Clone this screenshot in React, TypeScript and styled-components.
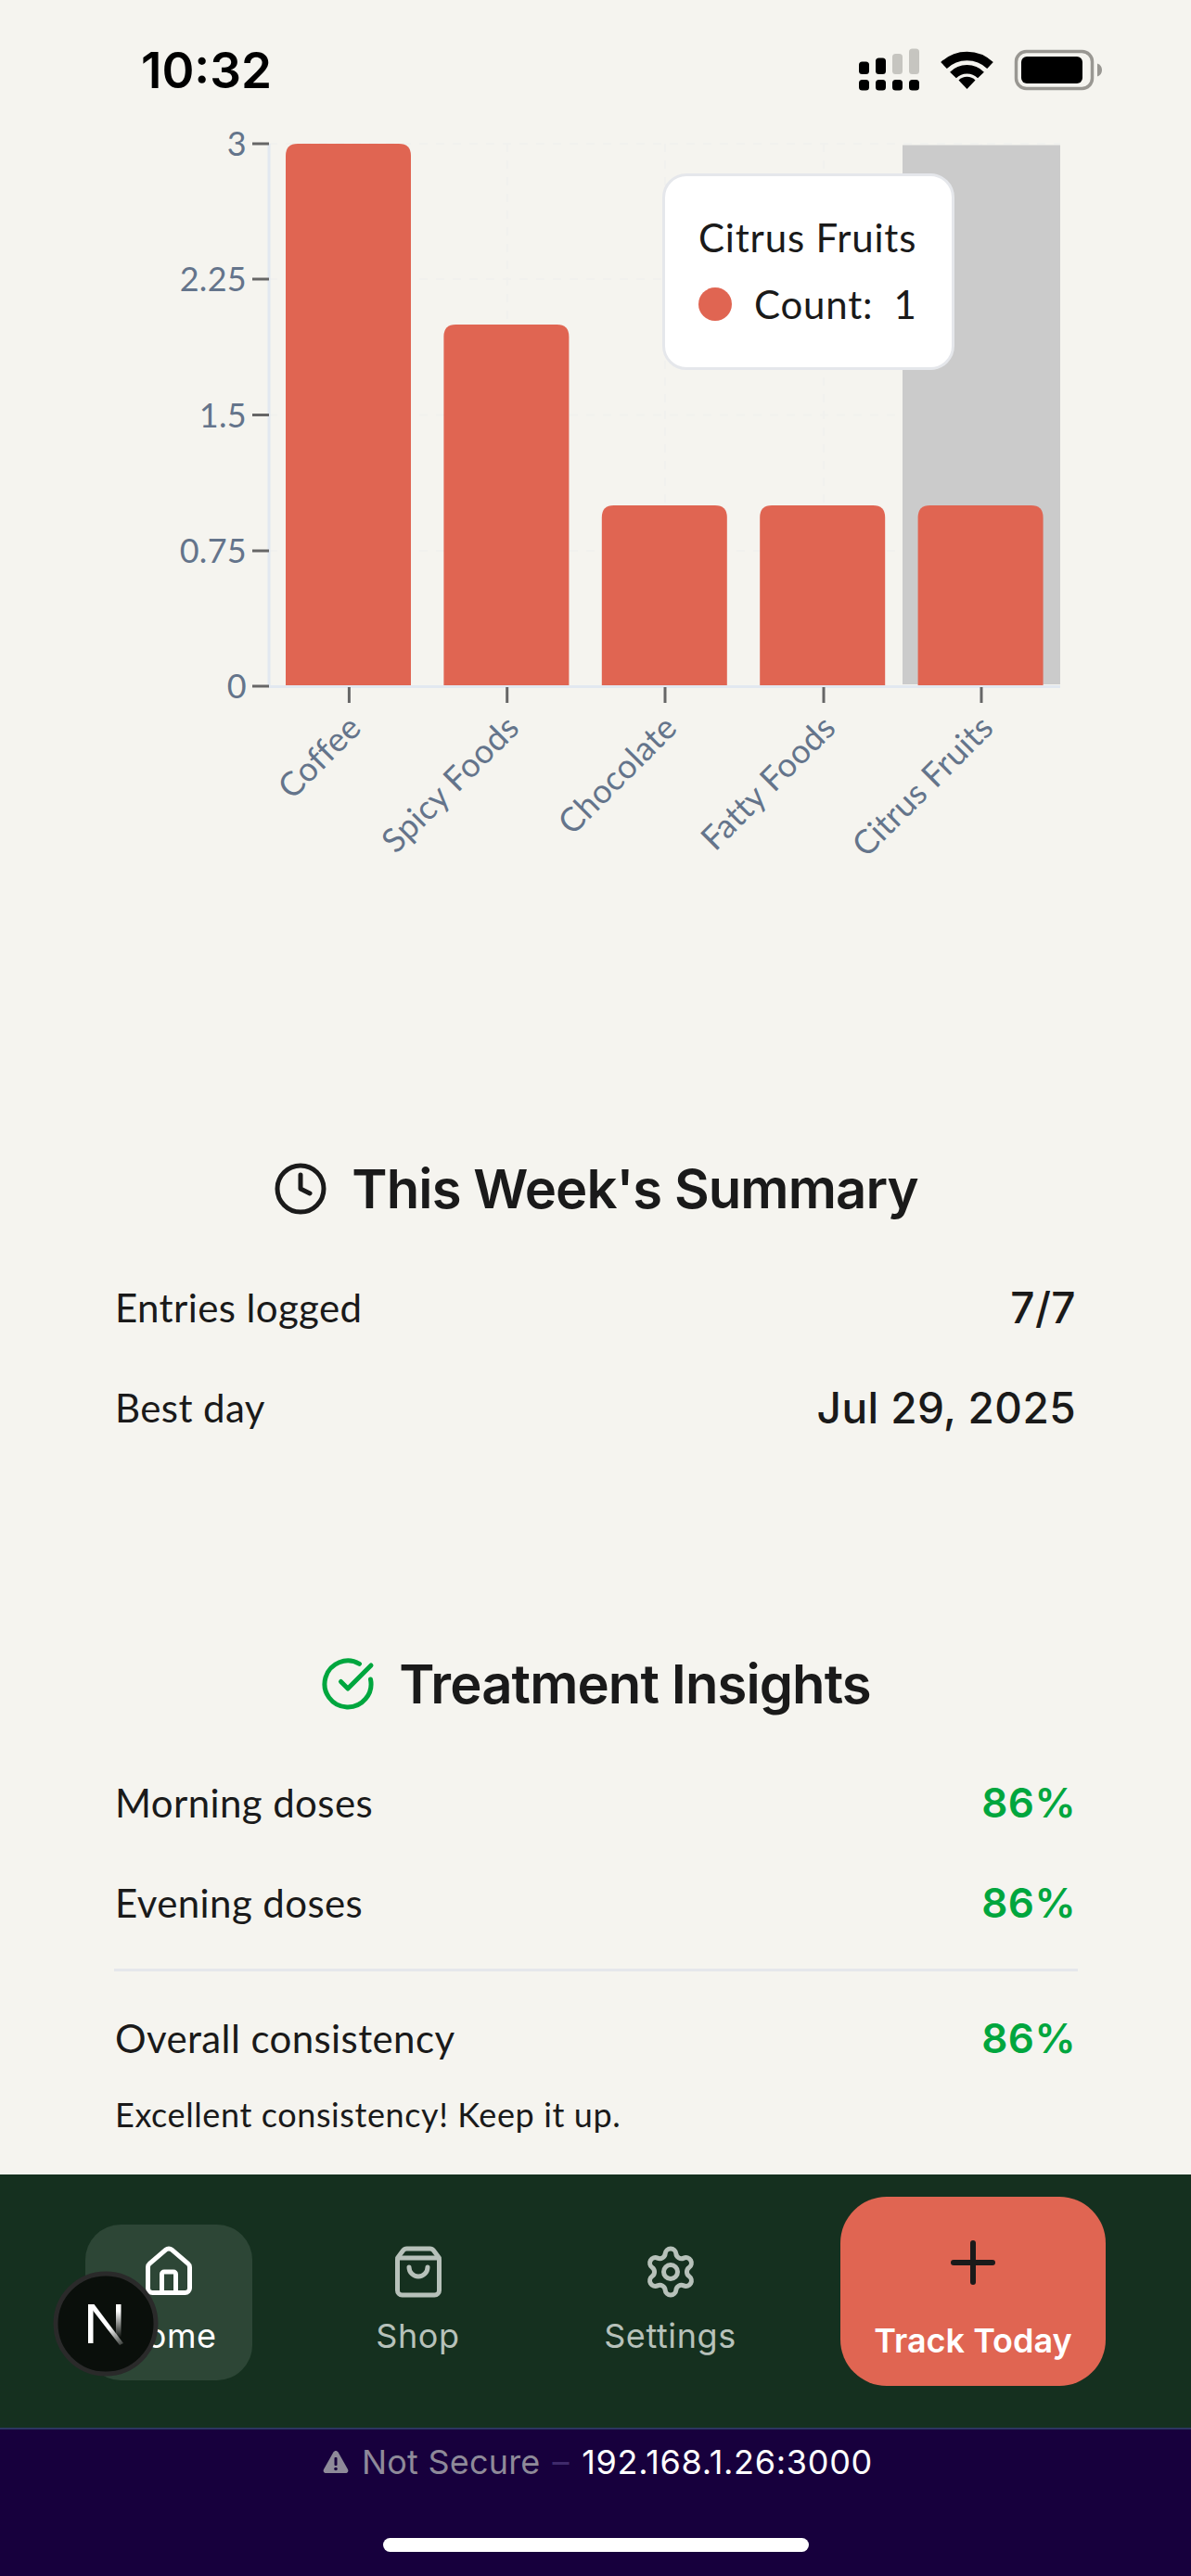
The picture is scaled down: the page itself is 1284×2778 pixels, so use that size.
import React from "react";
import styled, { createGlobalStyle } from "styled-components";
import { Clock, CircleCheckBig, House, ShoppingBag, Settings, Plus } from "lucide-react";

const Global = createGlobalStyle`
  html, body { margin: 0; padding: 0; background: #f5f4ef; }
  * { box-sizing: border-box; }
`;

const BODY = `"Lato", "Open Sans", sans-serif`;
const UI = `"Inter", "Liberation Sans", sans-serif`;
const CORAL = "#e06552";
const INK = "#1a1a1a";
const GREEN = "#00a63e";

const Page = styled.div`
  width: 1284px;
  height: 2778px;
  display: flex;
  flex-direction: column;
  overflow: hidden;
  position: relative;
  background: #f5f4ef;
  color: ${INK};
  font-family: ${BODY};
`;

const StatusBar = styled.header`
  height: 120px;
  flex: none;
  display: flex;
  justify-content: space-between;
  align-items: flex-start;
  padding: 44px 96px 0 152px;
`;
const Time = styled.div`
  font-family: ${UI};
  font-weight: 600;
  font-size: 53px;
  line-height: 64px;
  letter-spacing: 0;
  color: #000;
`;
const StatusIcons = styled.svg`
  display: block;
  margin-top: 8px;
`;

const ChartSection = styled.section`
  position: relative;
  height: 1126px;
  flex: none;
`;
const ChartSvg = styled.svg`
  display: block;
  width: 1284px;
  height: 1126px;
`;
const AxisText = styled.text`
  font-family: ${BODY};
  font-size: 36px;
  letter-spacing: 0.3px;
  fill: #64748b;
`;
const Tooltip = styled.div`
  position: absolute;
  left: 714px;
  top: 67px;
  width: 315px;
  height: 212px;
  background: #fff;
  border: 3px solid #e5e7eb;
  border-radius: 26px;
  padding: 37px 0 0 36px;
  font-size: 42px;
  line-height: 58px;
  letter-spacing: 0.8px;
  white-space: nowrap;
`;
const TooltipRow = styled.div`
  display: flex;
  align-items: center;
  margin-top: 14px;
`;
const Dot = styled.span`
  width: 36px;
  height: 36px;
  border-radius: 50%;
  background: ${CORAL};
  margin-right: 24px;
`;
const TooltipValue = styled.span`
  margin-left: 22px;
`;

const Card = styled.section<{ $gap: number }>`
  flex: none;
  margin-top: ${(p) => p.$gap}px;
  padding: 0 124px 0 124px;
`;
const Heading = styled.h2`
  margin: 0 0 56px;
  height: 72px;
  display: flex;
  align-items: center;
  justify-content: center;
  gap: 25px;
  font-family: ${UI};
  font-weight: 600;
  font-size: 58px;
  line-height: 72px;
  letter-spacing: -0.9px;
  color: ${INK};
`;
const Rows = styled.div`
  display: flex;
  flex-direction: column;
  gap: 36px;
`;
const Row = styled.div`
  height: 72px;
  display: flex;
  align-items: center;
  justify-content: space-between;
  font-size: 42px;
  letter-spacing: 0.4px;
`;
const Value = styled.span<{ $green?: boolean }>`
  font-family: ${UI};
  font-size: ${(p) => (p.$green ? 44 : 46)}px;
  font-weight: ${(p) => (p.$green ? 600 : 500)};
  letter-spacing: 0.4px;
  color: ${(p) => (p.$green ? GREEN : INK)};
`;
const Divider = styled.hr`
  border: 0;
  height: 3px;
  background: #e5e7eb;
  margin: -1px -2px 0 -1px;
`;
const Note = styled.p`
  margin: -17px 0 0;
  font-size: 36px;
  line-height: 54px;
  letter-spacing: 0.6px;
`;

const Spacer = styled.div`
  flex: 1;
`;

const Nav = styled.nav`
  position: relative;
  flex: none;
  height: 275px;
  background: #15301f;
  border-bottom: 2px solid #2c3560;
  font-family: ${UI};
  display: grid;
  grid-template-columns: 92px 180px 85px 187px 85px 187px 90px 286px;
  padding-top: 24px;
`;
const NavItem = styled.div<{ $col: number; $active?: boolean }>`
  grid-column: ${(p) => p.$col};
  height: 168px;
  margin-top: 30px;
  display: flex;
  flex-direction: column;
  align-items: center;
  padding-top: 21px;
  gap: 12px;
  border-radius: 38px;
  font-size: 36px;
  line-height: 54px;
  letter-spacing: 0.6px;
  color: ${(p) => (p.$active ? "#ffffff" : "#b7c1ba")};
  background: ${(p) => (p.$active ? "#2d4636" : "transparent")};
`;
const TrackButton = styled.div`
  grid-column: 8;
  height: 204px;
  border-radius: 50px;
  background: ${CORAL};
  display: flex;
  flex-direction: column;
  align-items: center;
  padding-top: 35px;
  gap: 21px;
  color: #fff;
  font-weight: 600;
  font-size: 36px;
  line-height: 54px;
`;
const DevBadge = styled.svg`
  position: absolute;
  left: 57px;
  top: 104px;
`;

const BrowserBar = styled.footer`
  flex: none;
  height: 158px;
  background: #17003d;
  display: flex;
  flex-direction: column;
  align-items: center;
  padding-top: 10px;
  font-family: ${UI};
  font-size: 36px;
  line-height: 50px;
`;
const Address = styled.div`
  display: flex;
  align-items: center;
  padding-left: 5px;
  color: #fff;
  letter-spacing: 0.7px;
`;
const Insecure = styled.span`
  color: #8e8a99;
  letter-spacing: 0.2px;
`;
const Dash = styled.span`
  color: #3f2a6b;
  margin: 0 13px;
`;
const WarnIcon = styled.svg`
  margin-right: 14px;
`;
const HomeIndicator = styled.div`
  width: 459px;
  height: 15px;
  margin-top: 57px;
  border-radius: 8px;
  background: #fff;
`;

const ticksY: [string, number][] = [
  ["3", 155],
  ["2.25", 301],
  ["1.5", 447.5],
  ["0.75", 594],
  ["0", 740],
];
const bars = [
  { name: "Coffee", x: 308, top: 155, tick: 376.4 },
  { name: "Spicy Foods", x: 478.4, top: 350, tick: 546.7 },
  { name: "Chocolate", x: 648.8, top: 545, tick: 717 },
  { name: "Fatty Foods", x: 819.2, top: 545, tick: 888 },
  { name: "Citrus Fruits", x: 989.6, top: 545, tick: 1058 },
];
const barPath = (x: number, top: number) => {
  const w = 135;
  const r = 13;
  return `M${x} 741V${top + r}Q${x} ${top} ${x + r} ${top}H${x + w - r}Q${x + w} ${top} ${x + w} ${top + r}V741Z`;
};

const rowsTreatment = [
  ["Morning doses", "86%"],
  ["Evening doses", "86%"],
];

export default function App() {
  return (
    <Page>
      <Global />
      <StatusBar>
        <Time>10:32</Time>
        <StatusIcons width="262" height="46" viewBox="925 52 262 46" aria-hidden>
          {[925, 943, 961, 979].map((x) => (
            <rect key={x} x={x} y={86} width={11} height={11.5} rx={3.5} fill="#000" />
          ))}
          <rect x={925} y={66.5} width={11} height={13.5} rx={3.5} fill="#000" />
          <rect x={943} y={62.5} width={11} height={17.5} rx={3.5} fill="#000" />
          <rect x={961} y={58} width={11} height={22} rx={3.5} fill="#c6c5c0" />
          <rect x={979} y={52.5} width={11} height={27.5} rx={3.5} fill="#c6c5c0" />
          <g fill="none" stroke="#000" strokeWidth={9.5}>
            <path d="M1016.5 70.5A36 36 0 0 1 1066.5 70.5" />
            <path d="M1026.5 81A21 21 0 0 1 1056.5 81" />
          </g>
          <path d="M1041.5 96L1032.5 86.5A12.7 12.7 0 0 1 1050.5 86.5Z" fill="#000" />
          <rect x={1094.5} y={55.5} width={82} height={40} rx={11} fill="none" stroke="#999792" strokeWidth={3.5} />
          <rect x={1100} y={61} width={66} height={29} rx={6} fill="#000" />
          <path d="M1182 68.5C1185 69.5 1187 72 1187 75.5S1185 81.5 1182 82.5Z" fill="#999792" />
        </StatusIcons>
      </StatusBar>

      <ChartSection>
        <ChartSvg viewBox="0 120 1284 1126">
          <g stroke="#f1f1ee" strokeWidth={2} strokeDasharray="9 9">
            {ticksY.slice(0, 4).map(([l, y]) => (
              <line key={l} x1={290} x2={1143} y1={y} y2={y} />
            ))}
            {bars.map((b) => (
              <line key={b.name} x1={b.tick} x2={b.tick} y1={155} y2={740} />
            ))}
          </g>
          <rect x={973} y={156.5} width={170} height={581.5} fill="#cbcbcb" />
          {bars.map((b) => (
            <path key={b.name} d={barPath(b.x, b.top)} fill={CORAL} />
          ))}
          <line x1={290} x2={290} y1={155} y2={741} stroke="#e2e8f0" strokeWidth={3} />
          <line x1={289} x2={1143} y1={740.5} y2={740.5} stroke="#e2e8f0" strokeWidth={3} />
          {ticksY.map(([l, y]) => (
            <g key={l}>
              <line x1={272} x2={290} y1={y} y2={y} stroke="#666" strokeWidth={3} />
              <AxisText x={266} y={y + 13} textAnchor="end">
                {l}
              </AxisText>
            </g>
          ))}
          {bars.map((b) => (
            <g key={b.name}>
              <line x1={b.tick} x2={b.tick} y1={741} y2={758} stroke="#666" strokeWidth={3} />
              <AxisText
                x={b.tick + 15}
                y={787}
                textAnchor="end"
                transform={`rotate(-45 ${b.tick + 15} 787)`}
              >
                {b.name}
              </AxisText>
            </g>
          ))}
        </ChartSvg>
        <Tooltip>
          <div>Citrus Fruits</div>
          <TooltipRow>
            <Dot />
            Count:
            <TooltipValue>1</TooltipValue>
          </TooltipRow>
        </Tooltip>
      </ChartSection>

      <Card $gap={0}>
        <Heading>
          <Clock size={60} color={INK} strokeWidth={2} />
          This Week's Summary
        </Heading>
        <Rows>
          <Row>
            <span>Entries logged</span>
            <Value>7/7</Value>
          </Row>
          <Row>
            <span>Best day</span>
            <Value>Jul 29, 2025</Value>
          </Row>
        </Rows>
      </Card>

      <Card $gap={226}>
        <Heading>
          <CircleCheckBig size={60} color={GREEN} strokeWidth={2} />
          Treatment Insights
        </Heading>
        <Rows>
          {rowsTreatment.map(([l, v]) => (
            <Row key={l}>
              <span>{l}</span>
              <Value $green>{v}</Value>
            </Row>
          ))}
          <Divider />
          <Row>
            <span>Overall consistency</span>
            <Value $green>86%</Value>
          </Row>
          <Note>Excellent consistency! Keep it up.</Note>
        </Rows>
      </Card>

      <Spacer />

      <Nav>
        <NavItem $col={2} $active>
          <House size={60} strokeWidth={2} />
          Home
        </NavItem>
        <NavItem $col={4}>
          <ShoppingBag size={60} strokeWidth={2} />
          Shop
        </NavItem>
        <NavItem $col={6}>
          <Settings size={60} strokeWidth={2} />
          Settings
        </NavItem>
        <TrackButton>
          <Plus size={72} color={INK} strokeWidth={2} />
          Track Today
        </TrackButton>
        <DevBadge width="114" height="114" viewBox="0 0 114 114" aria-hidden>
          <defs>
            <linearGradient id="nDiag" x1="38" y1="30" x2="76" y2="82" gradientUnits="userSpaceOnUse">
              <stop offset="0.6" stopColor="#fff" />
              <stop offset="1" stopColor="#fff" stopOpacity="0.1" />
            </linearGradient>
            <linearGradient id="nStem" x1="70" y1="36" x2="70" y2="72" gradientUnits="userSpaceOnUse">
              <stop offset="0.2" stopColor="#fff" />
              <stop offset="1" stopColor="#fff" stopOpacity="0" />
            </linearGradient>
          </defs>
          <circle cx="57" cy="57" r="54" fill="#0a0f0b" stroke="#2a2a2a" strokeWidth="5" />
          <rect x="38" y="36" width="5.5" height="42" fill="#fff" />
          <path d="M38 36H44.5L76 78L72 80Z" fill="url(#nDiag)" />
          <rect x="68" y="36" width="5.5" height="36" fill="url(#nStem)" />
        </DevBadge>
      </Nav>

      <BrowserBar>
        <Address>
          <WarnIcon width="28" height="26" viewBox="0 0 28 26" aria-hidden>
            <path
              d="M14 1C15 1 16 1.600 16.600 2.600L27 21C28 23 26.800 25 24.600 25H3.400C1.200 25 0 23 1 21L11.400 2.600C12 1.600 13 1 14 1Z"
              fill="#8e8a99"
            />
            <rect x="12.500" y="8" width="3" height="9" rx="1" fill="#17003d" />
            <circle cx="14" cy="20.500" r="1.800" fill="#17003d" />
          </WarnIcon>
          <Insecure>Not Secure</Insecure>
          <Dash>–</Dash>
          192.168.1.26:3000
        </Address>
        <HomeIndicator />
      </BrowserBar>
    </Page>
  );
}
